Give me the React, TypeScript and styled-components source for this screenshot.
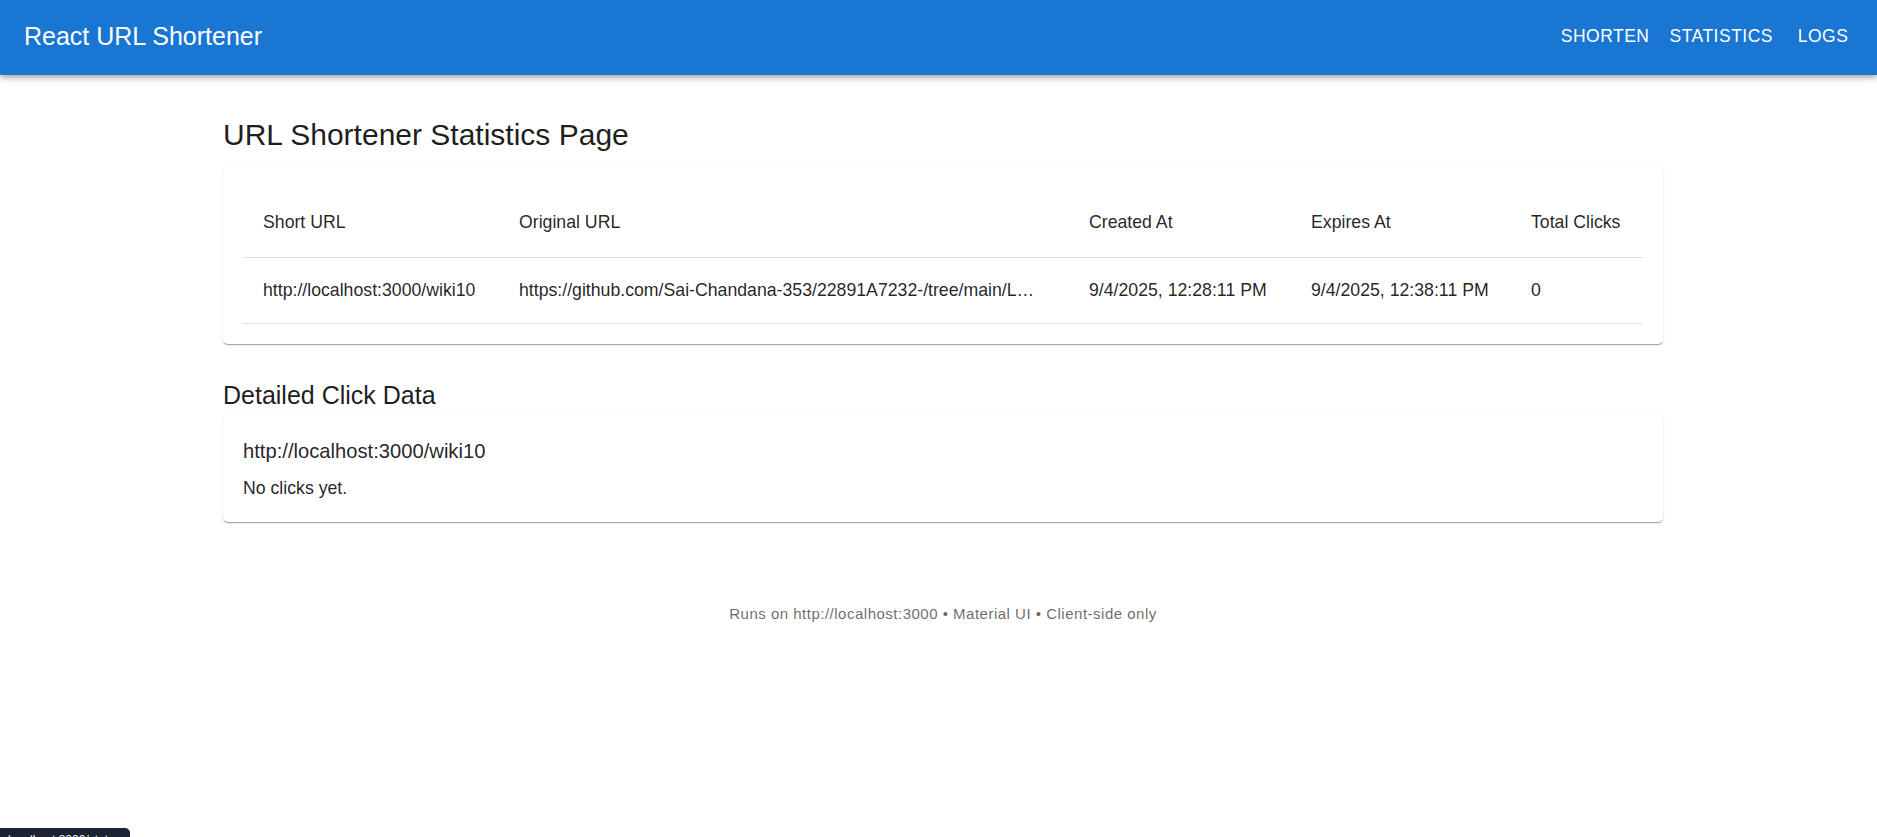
import React from "react";
import styled, { createGlobalStyle } from "styled-components";

const GlobalStyle = createGlobalStyle`
  html, body {
    margin: 0;
    padding: 0;
    background: #ffffff;
    font-family: "Liberation Sans", Arial, Helvetica, sans-serif;
    color: rgba(0, 0, 0, 0.87);
  }
  * { box-sizing: border-box; }
`;

const AppBar = styled.header`
  background: #1976d2;
  color: #ffffff;
  height: 75px;
  display: flex;
  align-items: center;
  justify-content: space-between;
  padding: 0 14px 0 24px;
  box-shadow: 0px 2px 4px -1px rgba(0, 0, 0, 0.2), 0px 4px 5px 0px rgba(0, 0, 0, 0.14),
    0px 1px 10px 0px rgba(0, 0, 0, 0.12);
  position: relative;
  z-index: 2;
`;

const Brand = styled.div`
  font-size: 25px;
  line-height: 32px;
  font-weight: 400;
  margin-bottom: 4px;
`;

const Nav = styled.nav`
  display: flex;
  align-items: center;
  margin-bottom: 2px;
`;

const NavButton = styled.button`
  background: transparent;
  border: 0;
  color: #ffffff;
  font-family: inherit;
  font-size: 17.5px;
  letter-spacing: 0.5px;
  text-transform: uppercase;
  min-width: 80px;
  padding: 7px 10px;
  line-height: 25px;
  cursor: pointer;
  text-align: center;
`;

const Page = styled.main`
  display: flex;
  justify-content: center;
  padding-left: 9px;
`;

const Container = styled.div`
  width: 1440px;
  display: flex;
  flex-direction: column;
`;

const Heading = styled.h1<{ $size: number; $top: number; $bottom: number }>`
  margin: ${(p) => p.$top}px 0 ${(p) => p.$bottom}px;
  font-size: ${(p) => p.$size}px;
  line-height: 40px;
  font-weight: 400;
  color: rgba(0, 0, 0, 0.9);
`;

const Card = styled.section`
  background: #ffffff;
  border-radius: 5px;
  padding: 20px;
  box-shadow: 0px 2px 1px -1px rgba(0, 0, 0, 0.2), 0px 1px 1px 0px rgba(0, 0, 0, 0.14),
    0px 1px 3px 0px rgba(0, 0, 0, 0.12);
`;

const Table = styled.table`
  width: 100%;
  border-collapse: collapse;
  table-layout: fixed;
  font-size: 17.7px;
`;

const HeadCell = styled.th`
  text-align: left;
  font-weight: 400;
  padding: 20px;
  line-height: 30px;
  border-bottom: 1px solid rgb(224, 224, 224);
  color: rgba(0, 0, 0, 0.87);
`;

const BodyCell = styled.td<{ $ellipsis?: boolean }>`
  padding: 20px ${(p) => (p.$ellipsis ? 28 : 20)}px 20px 20px;
  line-height: 25px;
  border-bottom: 1px solid rgb(224, 224, 224);
  color: rgba(0, 0, 0, 0.87);
  white-space: nowrap;
  overflow: hidden;
  text-overflow: ${(p) => (p.$ellipsis ? "ellipsis" : "clip")};
`;

const ClickCard = styled(Card)`
  padding: 20px 20px 21px;
`;

const ClickUrl = styled.div`
  font-size: 20.2px;
  line-height: 32px;
  margin-bottom: 8px;
`;

const ClickNote = styled.div`
  font-size: 17.7px;
  line-height: 26px;
`;

const Footer = styled.footer`
  text-align: center;
  padding-top: 79px;
  padding-left: 9px;
  font-size: 15px;
  line-height: 25px;
  letter-spacing: 0.5px;
  color: rgba(0, 0, 0, 0.6);
`;

const StatusBubble = styled.div`
  position: fixed;
  left: 0;
  bottom: -14px;
  width: 130px;
  height: 23px;
  background: #1c2333;
  border-top-right-radius: 5px;
  color: #e8eaed;
  font-size: 12px;
  line-height: 14px;
  padding: 5px 0 0 8px;
  overflow: hidden;
  white-space: nowrap;
`;

const columns = ["Short URL", "Original URL", "Created At", "Expires At", "Total Clicks"];
const widths = [256, 570, 222, 220, 132];

const row = {
  shortUrl: "http://localhost:3000/wiki10",
  original: "https://github.com/Sai-Chandana-353/22891A7232-/tree/main/Logging_Middleware",
  created: "9/4/2025, 12:28:11 PM",
  expires: "9/4/2025, 12:38:11 PM",
  clicks: 0,
};

export default function App() {
  return (
    <>
      <GlobalStyle />
      <AppBar>
        <Brand>React URL Shortener</Brand>
        <Nav>
          <NavButton>Shorten</NavButton>
          <NavButton>Statistics</NavButton>
          <NavButton>Logs</NavButton>
        </Nav>
      </AppBar>
      <Page>
        <Container>
          <Heading $size={30} $top={40} $bottom={12}>
            URL Shortener Statistics Page
          </Heading>
          <Card>
            <Table>
              <colgroup>
                {widths.map((w, i) => (
                  <col key={i} style={{ width: w }} />
                ))}
              </colgroup>
              <thead>
                <tr>
                  {columns.map((c) => (
                    <HeadCell key={c}>{c}</HeadCell>
                  ))}
                </tr>
              </thead>
              <tbody>
                <tr>
                  <BodyCell>{row.shortUrl}</BodyCell>
                  <BodyCell $ellipsis>{row.original}</BodyCell>
                  <BodyCell>{row.created}</BodyCell>
                  <BodyCell>{row.expires}</BodyCell>
                  <BodyCell>{row.clicks}</BodyCell>
                </tr>
              </tbody>
            </Table>
          </Card>
          <Heading as="h2" $size={25} $top={31} $bottom={0}>
            Detailed Click Data
          </Heading>
          <ClickCard>
            <ClickUrl>{row.shortUrl}</ClickUrl>
            <ClickNote>No clicks yet.</ClickNote>
          </ClickCard>
        </Container>
      </Page>
      <Footer>Runs on http://localhost:3000 • Material UI • Client-side only</Footer>
      <StatusBubble>localhost:3000/stats</StatusBubble>
    </>
  );
}
